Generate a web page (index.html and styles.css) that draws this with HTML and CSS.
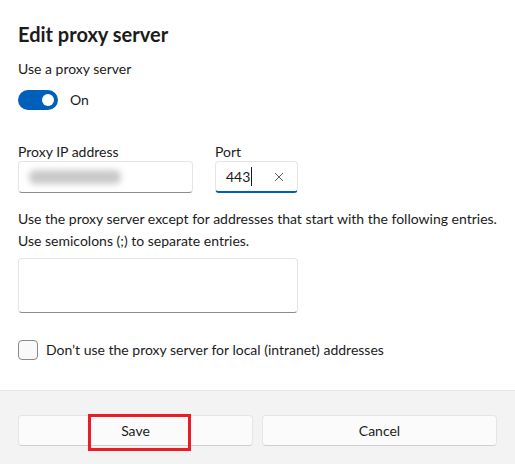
FILE: index.html
```html
<!DOCTYPE html>
<html>
<head>
<meta charset="utf-8">
<link rel="stylesheet" href="styles.css">
</head>
<body>
<div class="dialog">
  <div class="content">
    <h1 class="title">Edit proxy server</h1>
    <div class="label">Use a proxy server</div>
    <div class="toggle-row">
      <div class="toggle"><div class="knob"></div></div>
      <span class="toggle-text">On</span>
    </div>
    <div class="fields">
      <div class="field">
        <div class="field-label">Proxy IP address</div>
        <div class="input ip"><div class="blur"></div></div>
      </div>
      <div class="field">
        <div class="field-label">Port</div>
        <div class="input port focused">
          <span class="value">443</span><span class="caret"></span>
          <svg class="clear" width="10" height="10" viewBox="0 0 10 10"><path d="M1 1L9 9M9 1L1 9" stroke="#5f5f5f" stroke-width="1" fill="none"/></svg>
        </div>
      </div>
    </div>
    <p class="desc">Use the proxy server except for addresses that start with the following entries.<br>Use semicolons (;) to separate entries.</p>
    <div class="input area"></div>
    <label class="check-row">
      <span class="checkbox"></span>
      <span class="check-text">Don’t use the proxy server for local (intranet) addresses</span>
    </label>
  </div>
  <div class="footer">
    <div class="btn save-btn">Save<span class="highlight"></span></div>
    <div class="btn">Cancel</div>
  </div>
</div>
</body>
</html>
```
FILE: styles.css
```css
* { box-sizing: border-box; }
html, body { margin: 0; padding: 0; }
body {
  width: 515px;
  height: 464px;
  background: #fff;
  font-family: "Lato", "Noto Sans", sans-serif;
  color: #1b1b1b;
  font-size: 14px;
  overflow: hidden;
}
.dialog { display: flex; flex-direction: column; height: 464px; }
.content { padding: 20px 18px 0 18px; height: 390px; }
.title {
  margin: 0;
  font-size: 20px;
  font-weight: 700;
  line-height: 28px;
}
.label { margin-top: 11px; line-height: 20px; }
.toggle-row { display: flex; align-items: center; margin-top: 11px; height: 20px; }
.toggle {
  width: 40px; height: 20px; border-radius: 10px;
  background: #005fb8; position: relative;
}
.knob {
  position: absolute; width: 12px; height: 12px; border-radius: 50%;
  background: #fff; top: 4px; right: 4px;
}
.toggle-text { margin-left: 12px; line-height: 20px; }
.fields { display: flex; gap: 22px; margin-top: 32px; }
.field-label { line-height: 20px; height: 19px; }
.input {
  background: #fff;
  border: 1px solid #e5e5e5;
  border-bottom-color: #8d8d8d;
  border-radius: 4px;
  height: 32px;
  position: relative;
}
.ip { width: 175px; }
.blur {
  position: absolute; left: 10px; top: 8px; width: 92px; height: 14px;
  background: #c9c9c9; filter: blur(3px); border-radius: 6px;
}
.port {
  width: 83px; display: flex; align-items: center; padding-left: 10px;
  border-bottom: 2px solid #005fb8;
}
.value { line-height: 20px; }
.caret { width: 1px; height: 19px; background: #1b1b1b; margin-left: 1px; }
.clear { margin-left: auto; margin-right: 13px; }
.desc { margin: 15px 0 0 0; line-height: 22px; }
.area { width: 280px; height: 55px; margin-top: 6px; }
.check-row { display: flex; align-items: center; margin-top: 27px; }
.checkbox {
  width: 20px; height: 20px; border: 1px solid #8a8a8a; border-radius: 4px;
  background: #f9f9f9;
}
.check-text { margin-left: 8px; line-height: 20px; }
.footer {
  flex: 1;
  background: #f3f3f3;
  border-top: 1px solid #e5e5e5;
  display: flex;
  gap: 9px;
  padding: 24px 18px 0 18px;
}
.btn {
  flex: 1; height: 31px; background: #fbfbfb;
  border: 1px solid #e5e5e5; border-bottom-color: #d0d0d0; border-radius: 4px;
  display: flex; align-items: center; justify-content: center;
  position: relative; line-height: 20px;
}
.highlight {
  position: absolute; left: 69px; top: -2px; width: 103px; height: 37px;
  border: 3px solid #ed1c24;
}
```
